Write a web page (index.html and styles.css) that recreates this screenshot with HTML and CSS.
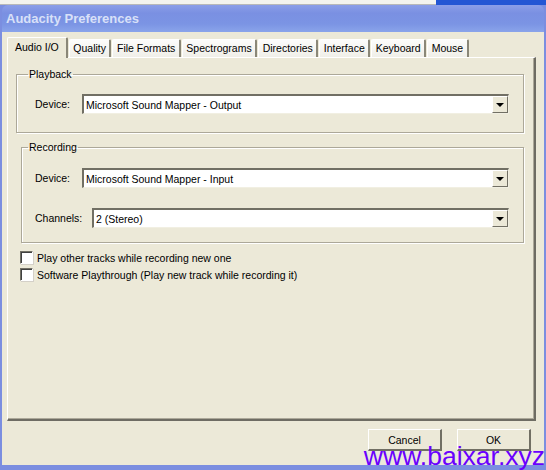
FILE: index.html
```html
<!DOCTYPE html>
<html lang="en">
<head>
    <meta charset="UTF-8">
    <title>Audacity Preferences</title>
    <link rel="stylesheet" href="styles.css">
</head>
<body>
    <div class="desk-strip">
        <div class="strip-left"></div>
        <div class="strip-right"></div>
    </div>
    <div class="window">
        <div class="titlebar">Audacity Preferences</div>
        <div class="client">
            <div class="tabs">
                <div class="tab active">Audio I/O</div>
                <div class="tab">Quality</div>
                <div class="tab">File Formats</div>
                <div class="tab">Spectrograms</div>
                <div class="tab">Directories</div>
                <div class="tab">Interface</div>
                <div class="tab">Keyboard</div>
                <div class="tab">Mouse</div>
            </div>
            <div class="panel">
                <fieldset class="group playback">
                    <legend>Playback</legend>
                    <div class="row">
                        <span class="label">Device:</span>
                        <div class="combo">
                            <span class="value">Microsoft Sound Mapper - Output</span>
                            <span class="arrow"></span>
                        </div>
                    </div>
                </fieldset>
                <fieldset class="group recording">
                    <legend>Recording</legend>
                    <div class="row">
                        <span class="label">Device:</span>
                        <div class="combo">
                            <span class="value">Microsoft Sound Mapper - Input</span>
                            <span class="arrow"></span>
                        </div>
                    </div>
                    <div class="row">
                        <span class="label">Channels:</span>
                        <div class="combo">
                            <span class="value">2 (Stereo)</span>
                            <span class="arrow"></span>
                        </div>
                    </div>
                </fieldset>
                <div class="check"><span class="box"></span>Play other tracks while recording new one</div>
                <div class="check"><span class="box"></span>Software Playthrough (Play new track while recording it)</div>
            </div>
            <div class="buttons">
                <div class="btn">Cancel</div>
                <div class="btn">OK</div>
            </div>
        </div>
    </div>
    <div class="watermark">www.baixar.xyz</div>
</body>
</html>
```
FILE: styles.css
```css
body {
    margin: 0;
    width: 546px;
    height: 470px;
    overflow: hidden;
    position: relative;
    font-family: "Liberation Sans", Arial, sans-serif;
    font-size: 10.5px;
    color: #000;
    background: #3a5fcd;
}
.desk-strip {
    display: flex;
    height: 5px;
}
.strip-left {
    flex: 1;
    background: #f4f3ee;
    border-bottom: 1px solid #b8b8b8;
}
.strip-right {
    width: 110px;
    background: #2456d4;
}
.window {
    height: 465px;
    background: #7b8ee0;
    padding: 0 2px 5px 2px;
    box-sizing: border-box;
    display: flex;
    flex-direction: column;
}
.titlebar {
    height: 27px;
    line-height: 28px;
    padding-left: 4px;
    font-size: 13px;
    font-weight: bold;
    color: #d8e0f8;
    background: linear-gradient(#8c9ee8 0%, #7a90e2 30%, #7b94e4 70%, #8aa4ea 100%);
    border-radius: 6px 6px 0 0;
}
.client {
    flex: 1;
    background: #ece9d8;
    padding: 4px 0 0 5px;
    display: flex;
    flex-direction: column;
}
.tabs {
    display: flex;
    align-items: flex-end;
    height: 21px;
    padding-left: 1px;
}
.tab {
    height: 17px;
    line-height: 17px;
    padding: 0 3.5px;
    margin-right: 1px;
    background: linear-gradient(#fcfcfb, #f0efe8);
    border: 1px solid #fff;
    border-right: 2px solid #8a8778;
    border-bottom: none;
    border-radius: 2px 2px 0 0;
}
.tab.active {
    height: 20px;
    line-height: 19px;
    padding: 0 7px;
    margin-left: -1px;
    background: #ece9d8;
    position: relative;
    top: 1px;
}
.panel {
    height: 364px;
    width: 529px;
    box-sizing: border-box;
    border-left: 1px solid #fff;
    border-top: 1px solid #fff;
    border-right: 2px solid #6e6c63;
    border-bottom: 2px solid #6e6c63;
    box-shadow: inset -1px -1px 0 #aca899;
    padding: 10px 10px 0 8px;
}
.group {
    margin: 0;
    padding: 0;
    border: 1px solid #aca899;
    box-shadow: 1px 1px 0 #fff, inset 1px 1px 0 #fff;
}
.group legend {
    padding: 0 1px;
}
.playback {
    height: 49px;
    padding: 14px 14px 0 18px;
}
.playback legend {
    margin-left: -7px;
}
.recording {
    margin-top: 8px;
    margin-left: 5px;
    height: 85px;
    padding: 15px 14px 0 13px;
}
.recording legend {
    margin-left: -7px;
}
.row {
    display: flex;
    align-items: center;
    height: 20px;
}
.recording .row + .row {
    margin-top: 20px;
}
.label {
    width: 47px;
}
.recording .row + .row .label {
    width: 57px;
}
.combo {
    flex: 1;
    height: 20px;
    box-sizing: border-box;
    background: #fff;
    border-left: 2px solid #716f64;
    border-top: 2px solid #716f64;
    border-right: 1px solid #f1efe2;
    border-bottom: 1px solid #f1efe2;
    display: flex;
    align-items: center;
}
.value {
    flex: 1;
    padding-left: 2px;
}
.arrow {
    width: 16px;
    height: 17px;
    box-sizing: border-box;
    background: #ece9d8;
    border-left: 1px solid #fff;
    border-top: 1px solid #fff;
    border-right: 1px solid #716f64;
    border-bottom: 1px solid #716f64;
    display: flex;
    align-items: center;
    justify-content: center;
}
.arrow::after {
    content: "";
    border-left: 4px solid transparent;
    border-right: 4px solid transparent;
    border-top: 4px solid #000;
    margin-top: 1px;
}
.check {
    display: flex;
    align-items: center;
    height: 17px;
    margin-left: 4px;
}
.check:first-of-type {
    margin-top: 6px;
}
.box {
    width: 13px;
    height: 13px;
    box-sizing: border-box;
    background: #fff;
    border-left: 1px solid #716f64;
    border-top: 1px solid #716f64;
    border-right: 1px solid #fff;
    border-bottom: 1px solid #fff;
    box-shadow: inset 1px 1px 0 #404040, 1px 1px 0 #d4d0c8;
    margin-right: 4px;
}
.buttons {
    display: flex;
    justify-content: flex-end;
    gap: 15px;
    padding: 8px 13px 0 0;
}
.btn {
    width: 74px;
    height: 22px;
    line-height: 21px;
    box-sizing: border-box;
    text-align: center;
    background: #ece9d8;
    border-left: 1px solid #fff;
    border-top: 1px solid #fff;
    border-right: 2px solid #716f64;
    border-bottom: 2px solid #716f64;
}
.watermark {
    position: absolute;
    right: 1px;
    bottom: 2px;
    line-height: 24px;
    font-family: "Liberation Sans", Arial, sans-serif;
    font-size: 26.5px;
    color: #6a00ff;
}
```
